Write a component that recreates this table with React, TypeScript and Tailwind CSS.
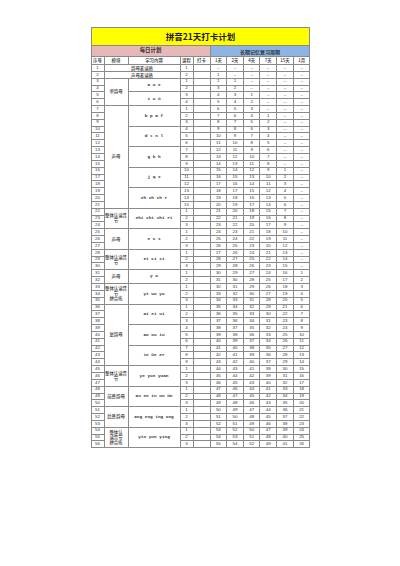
import React from "react";

type Group = { module: string[] | null; items: [string, number][] };

const groups: Group[] = [
  { module: null, items: [["韵母表读熟", 1], ["声母表读熟", 1]] },
  { module: ["单韵母"], items: [["a o e", 2], ["i u ü", 2]] },
  {
    module: ["声母"],
    items: [
      ["b p m f", 3],
      ["d t n l", 3],
      ["g k h", 3],
      ["j q x", 3],
      ["zh ch sh r", 3],
    ],
  },
  { module: ["整体认读音", "节"], items: [["zhi chi shi ri", 3]] },
  { module: ["声母"], items: [["z c s", 3]] },
  { module: ["整体认读音", "节"], items: [["zi ci si", 3]] },
  { module: ["声母"], items: [["y w", 2]] },
  { module: ["整体认读音", "节", "拼合练"], items: [["yi wu yu", 3]] },
  {
    module: ["复韵母"],
    items: [
      ["ai ei ui", 3],
      ["ao ou iu", 3],
      ["ie üe er", 3],
    ],
  },
  { module: ["整体认读音", "节"], items: [["ye yue yuan", 3]] },
  { module: ["前鼻韵母"], items: [["an en in un ün", 3]] },
  { module: ["后鼻韵母"], items: [["ang eng ing ong", 3]] },
  { module: ["整体认", "读音节", "拼合练"], items: [["yin yun ying", 3]] },
];

const reviewDays = [1, 2, 4, 7, 15, 30];
const reviewHeads = ["1天", "2天", "4天", "7天", "15天", "1月"];
const heads = ["序号", "模块", "学习内容", "课程", "打卡"];

const FIRST_ROW = 4; // grid line where data rows begin
const cell =
  "flex items-center justify-center border-r border-b border-[#8a8a8a] leading-none text-center";

export default function App() {
  const cells: React.ReactNode[] = [];
  let row = 1;

  groups.forEach((g, gi) => {
    const total = g.items.reduce((s, [, n]) => s + n, 0);
    const start = row;

    if (g.module) {
      cells.push(
        <div
          key={`m${gi}`}
          className={`${cell} flex-col font-['Noto_Sans_CJK_SC',sans-serif] text-[4.4px] font-medium`}
          style={{ gridColumn: "2", gridRow: `${start + FIRST_ROW - 1} / span ${total}` }}
        >
          {g.module.map((l) => (
            <span key={l} className="block leading-[5px]">
              {l}
            </span>
          ))}
        </div>
      );
    }

    let course = 1;
    let r = start;
    g.items.forEach(([text, n], ii) => {
      cells.push(
        <div
          key={`c${gi}-${ii}`}
          className={`${cell} ${
            g.module
              ? "font-['Liberation_Mono',monospace] text-[4.4px] font-bold"
              : "font-['Noto_Sans_CJK_SC',sans-serif] text-[4.4px] font-medium"
          }`}
          style={{
            gridColumn: g.module ? "3" : "2 / span 2",
            gridRow: `${r + FIRST_ROW - 1} / span ${n}`,
          }}
        >
          {text}
        </div>
      );
      for (let k = 0; k < n; k++) {
        const idx = r + k;
        const gr = idx + FIRST_ROW - 1;
        cells.push(
          <div key={`n${idx}`} className={cell} style={{ gridColumn: "1", gridRow: `${gr}` }}>
            {idx}
          </div>,
          <div key={`k${idx}`} className={cell} style={{ gridColumn: "4", gridRow: `${gr}` }}>
            {course++}
          </div>,
          <div key={`d${idx}`} className={cell} style={{ gridColumn: "5", gridRow: `${gr}` }} />
        );
        reviewDays.forEach((d, di) => {
          const v = idx - d;
          cells.push(
            <div
              key={`r${idx}-${di}`}
              className={cell}
              style={{ gridColumn: `${6 + di}`, gridRow: `${gr}` }}
            >
              {v > 0 ? v : "–"}
            </div>
          );
        });
      }
      r += n;
    });
    row += total;
  });

  return (
    <div className="min-h-[566px] w-full bg-white pt-[27px]">
      <div className="mx-auto grid w-[219px] grid-cols-[13px_24px_52px_13px_17px_repeat(6,16.67px)] grid-rows-[18px_11px_8px_repeat(56,6.857px)] border-l border-t border-[#8a8a8a] font-['Liberation_Sans',sans-serif] text-[4.4px] text-[#333]">
        {/* Title */}
        <div
          className={`${cell} col-span-11 bg-[#ffff00] font-['Noto_Sans_CJK_SC',sans-serif] text-[8.5px] font-bold text-[#1a1a1a]`}
        >
          拼音21天打卡计划
        </div>

        {/* Section headers */}
        <div
          className={`${cell} col-span-5 bg-[#e6b8b7] font-['Noto_Sans_CJK_SC',sans-serif] text-[5.4px] font-bold`}
        >
          每日计划
        </div>
        <div
          className={`${cell} col-span-6 bg-[#8db4e2] font-['Noto_Sans_CJK_SC',sans-serif] text-[5px] font-bold`}
        >
          长期记忆复习周期
        </div>

        {/* Column headers */}
        {heads.map((h) => (
          <div
            key={h}
            className={`${cell} font-['Noto_Sans_CJK_SC',sans-serif] text-[4.4px] font-medium`}
          >
            {h}
          </div>
        ))}
        {reviewHeads.map((h) => (
          <div
            key={h}
            className={`${cell} font-['Noto_Sans_CJK_SC',sans-serif] text-[4.4px] font-medium`}
          >
            {h}
          </div>
        ))}

        {cells}
      </div>
    </div>
  );
}
